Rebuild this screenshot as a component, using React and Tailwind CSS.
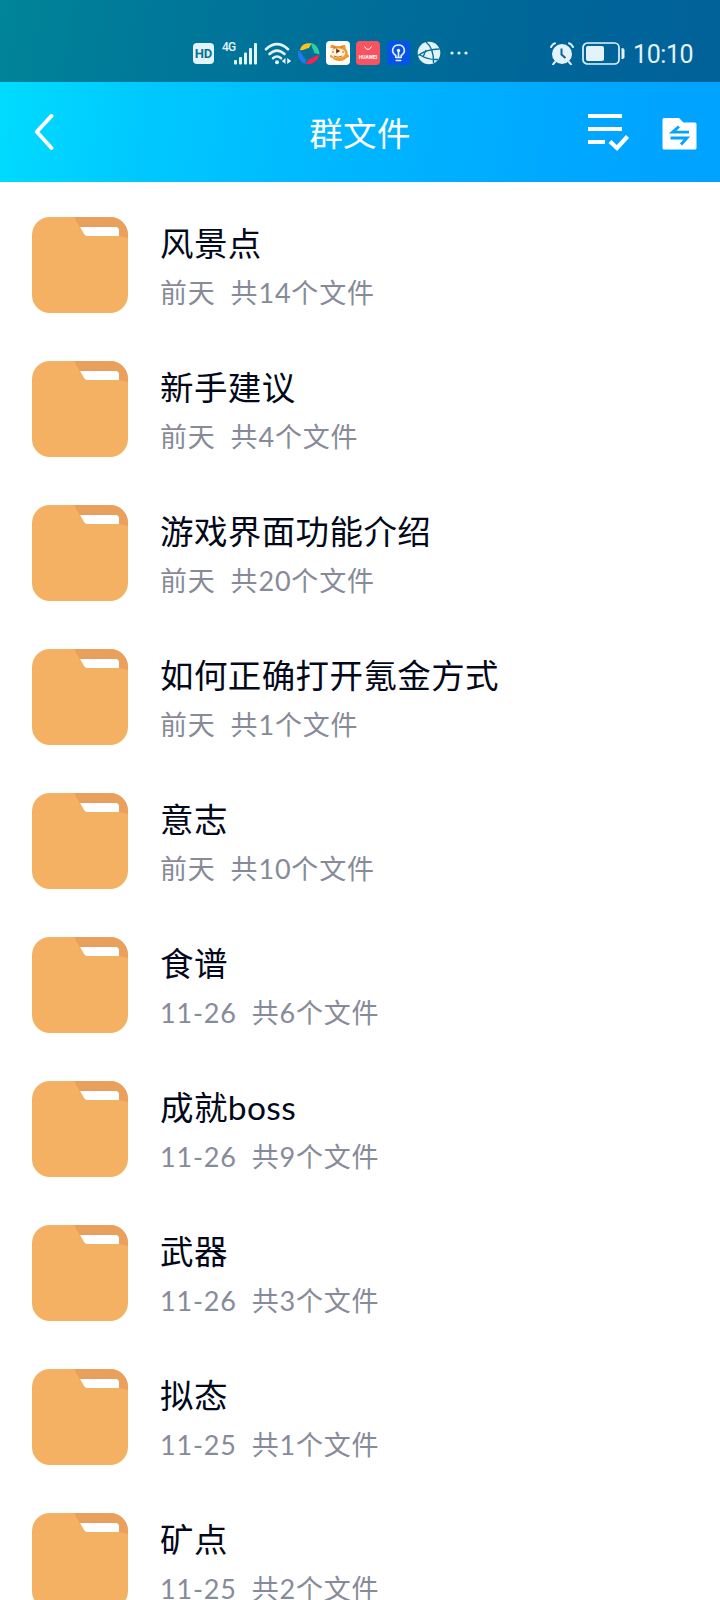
const folders = [
    { id: 1, name: "风景点", date: "前天", count: 14 },
    { id: 2, name: "新手建议", date: "前天", count: 4 },
    { id: 3, name: "游戏界面功能介绍", date: "前天", count: 20 },
    { id: 4, name: "如何正确打开氪金方式", date: "前天", count: 1 },
    { id: 5, name: "意志", date: "前天", count: 10 },
    { id: 6, name: "食谱", date: "11-26", count: 6 },
    { id: 7, name: "成就boss", date: "11-26", count: 9 },
    { id: 8, name: "武器", date: "11-26", count: 3 },
    { id: 9, name: "拟态", date: "11-25", count: 1 },
    { id: 10, name: "矿点", date: "11-25", count: 2 },
];

function SignalIcons() {
    return (
        <>
            <div className="w-[21px] h-[21px] rounded-[4px] bg-[#e3f3fa] text-[#04719a] flex items-center justify-center font-['Roboto',sans-serif] text-[13px] leading-none font-bold">
                HD
            </div>
            <div className="ml-2 w-[13px] h-[23px] font-['Roboto',sans-serif] text-[12px] leading-[10px] font-medium tracking-[-0.8px] text-[#e3f3fa]">
                4G
            </div>
            <svg className="-ml-px w-6 h-[23px]" viewBox="0 0 24 23" fill="#e3f3fa">
                <rect x="0" y="18" width="3" height="4.5" rx="1" />
                <rect x="5" y="15" width="3" height="7.5" rx="1" />
                <rect x="10" y="10.500" width="3" height="12" rx="1" />
                <rect x="15" y="6" width="3" height="16.500" rx="1" />
                <rect x="20" y="1" width="3" height="21.500" rx="1" />
            </svg>
            <svg className="ml-1.5 w-7 h-[23px]" viewBox="0 0 28 23" fill="none" stroke="#e3f3fa" strokeWidth="2.600" strokeLinecap="round">
                <path d="M2 7.200Q13 -2.800 24 7.200" />
                <path d="M5.500 12Q13 5.200 20.500 12" />
                <path d="M9 16.200Q13 12.800 17 16.200" />
                <circle cx="13" cy="20.300" r="2" fill="#e3f3fa" stroke="none" />
                <path d="M21.500 16v6l-3.700-3zM23.200 16l4 3-4 3z" fill="#e3f3fa" stroke="none" />
            </svg>
        </>
    );
}

function AppIcons() {
    return (
        <>
            <svg className="ml-[5px] w-[23px] h-[23px]" viewBox="0 0 23 23">
                <path d="M3 8C4 3 8 .500 14.500 1.300L12 6C8.500 6.500 6 9 3 8z" fill="#f9c51c" />
                <path d="M14 1C19 2 22 6 22.500 12.500L17.500 11C17 8 14.500 6 14 1z" fill="#2bd0a0" />
                <path d="M22.500 13C21 19 16 23 8.500 22L11.500 17.500C15 17 18 13 22.500 13z" fill="#ee2452" />
                <path d="M1.500 8.500C0 14 2 19.500 8.500 22L9 17.500C6 16 6 11 1.500 8.500z" fill="#2377ed" />
            </svg>
            <svg className="ml-1.5 w-6 h-6" viewBox="0 0 24 24">
                <rect width="24" height="24" rx="4" fill="#fff" />
                <path d="M4.500 7Q4 3 7 4l2 1h6l2-1q3-1 2.500 3 2.500 3 2 6l1 1q2 2-2 3-2 3-7 3t-7-3q-4-1-2-3l1-1q-.500-3 2-6z" fill="#f29a2e" />
                <ellipse cx="12" cy="12.200" rx="7.200" ry="4.800" fill="#fff4dc" />
                <path d="M10.200 7.500v5l4-2.500z" fill="#6d2b13" />
                <path d="M6 11h2M16 11h2M8 15q4 2.500 8 0M7.500 6h2M14.500 6h2" fill="none" stroke="#bd6616" />
            </svg>
            <div className="ml-1.5 w-6 h-6 rounded-[4px] bg-[#f95261] flex flex-col items-center justify-center text-white">
                <svg className="w-2.5 h-[5px]" viewBox="0 0 10 5" fill="none" stroke="currentColor">
                    <path d="M1.500 .500Q5 6.500 8.500 .500" />
                </svg>
                <span className="mt-[3px] font-['Roboto',sans-serif] font-bold text-[5px] leading-[6px]">
                    HUAWEI
                </span>
            </div>
            <svg className="ml-[7px] w-[23px] h-6" viewBox="0 0 23 24" fill="none" stroke="#e8f2ff" strokeWidth="1.600">
                <rect width="23" height="24" rx="4" fill="#0752e8" stroke="none" />
                <path d="M8.800 16.500v-2C3 10.500 6 4 11.500 4s8.500 6.500 2.700 10.500v2z" strokeLinejoin="round" />
                <path d="M11.500 10v6M9.200 19.500h4.600" strokeLinecap="round" />
                <circle cx="11.500" cy="9.500" r=".900" fill="#e8f2ff" />
            </svg>
            <svg className="ml-[7px] w-6 h-6" viewBox="0 0 24 24">
                <circle cx="12" cy="12" r="11.300" fill="#e3f3fa" />
                <path d="M9 1Q17 7 16.500 22M22.500 8Q10 8 1 14.500M3 14Q11 19 21 18.500M9 9L6 16" fill="none" stroke="#04719a" strokeWidth="1.400" />
            </svg>
            <svg className="ml-[9px] w-[18px] h-1" viewBox="0 0 18 4" fill="#e3f3fa">
                <circle cx="2" cy="2" r="1.600" />
                <circle cx="9" cy="2" r="1.600" />
                <circle cx="16" cy="2" r="1.600" />
            </svg>
        </>
    );
}

function StatusBar() {
    return (
        <div className="h-[82px] bg-black/40 pt-[41px]">
            <div className="flex items-center h-6 pl-[193px]">
                <SignalIcons />
                <AppIcons />
                <svg className="ml-[82px] w-6 h-[23px]" viewBox="0 0 24 23">
                    <path d="M1 5Q2.500 2 5 1.300M23 5Q21.500 2 19 1.300M5 20l-2 2.300M19 20l2 2.300" fill="none" stroke="#e3f3fa" strokeWidth="2" strokeLinecap="round" />
                    <circle cx="12" cy="12" r="10" fill="#e3f3fa" />
                    <path d="M11.500 6.500v6l4 3.500" fill="none" stroke="#066798" strokeWidth="2" />
                </svg>
                <svg className="ml-2 w-[43px] h-[23px]" viewBox="0 0 43 23" fill="#e3f3fa">
                    <rect x="1" y="1" width="36" height="21" rx="4.500" fill="none" stroke="#e3f3fa" strokeWidth="1.700" />
                    <rect x="4" y="4" width="18" height="15" rx="2" />
                    <path d="M39.500 6q3 0 3 2v7q0 2-3 2z" />
                </svg>
                <span className="ml-2 pt-1 font-['Roboto',sans-serif] text-[25px] leading-6 tracking-[-0.4px] text-[#e3f3fa]">
                    10:10
                </span>
            </div>
        </div>
    );
}

function Header() {
    return (
        <div className="h-[100px] grid grid-cols-3 items-center text-white">
            <svg className="ml-[34px] w-5 h-9" viewBox="0 0 20 36" fill="none" stroke="currentColor" strokeWidth="3.900" strokeLinecap="round" strokeLinejoin="round">
                <path d="M17.500 1.900L2.800 17.800L17.500 34" />
            </svg>
            <h1 className="text-center text-[33.5px] leading-[48px] tracking-[0.3px] pt-0.5">群文件</h1>
            <div className="flex justify-end items-center pr-[23px]">
                <svg className="w-[42px] h-[38px]" viewBox="0 0 42 38" fill="none" stroke="currentColor" strokeWidth="4.200">
                    <path d="M1 3h34M1 16h34M1 29h17M23 28.500l7 6.500L40.500 23.500" />
                </svg>
                <svg className="ml-[33px] mt-1 w-[35px] h-8" viewBox="0 0 35 32">
                    <path d="M2 0h15l4.500 4.500H33a1.500 1.500 0 0 1 1.500 1.500v24a1.500 1.500 0 0 1-1.500 1.500H2A1.500 1.500 0 0 1 .500 30V1.500A1.500 1.500 0 0 1 2 0z" fill="currentColor" />
                    <path d="M27 14.200H10.500L17 8.500M8.500 20H25l-6 6.500" fill="none" stroke="#00a3ff" strokeWidth="2.800" />
                </svg>
            </div>
        </div>
    );
}

function FolderIcon() {
    return (
        <div className="w-24 h-24 shrink-0 rounded-[18px] overflow-hidden bg-[#f5b163]">
            <svg className="block w-24 h-24" viewBox="0 0 96 96">
                <path d="M42 0h54v21.500Q92 19 86 19H53z" fill="#e8a05c" />
                <path d="M48 10h35.500q3.500 0 3.500 3.500V19H55q-2 0-3-2z" fill="#fff" />
            </svg>
        </div>
    );
}

function FolderRow({ folder }) {
    return (
        <li className="h-36 flex items-center pl-8">
            <FolderIcon />
            <div className="ml-8 h-24 pt-0.5">
                <div className="text-[33.5px] leading-[48px] tracking-[0.4px] text-[#03081a]">
                    {folder.name}
                </div>
                <div className="mt-1.5 flex gap-[15px] text-[27px] leading-10 tracking-[0.8px] text-[#878b99]">
                    <span>{folder.date}</span>
                    <span>共{folder.count}个文件</span>
                </div>
            </div>
        </li>
    );
}

function App() {
    return (
        <div className="w-[720px] h-[1600px] overflow-hidden bg-white whitespace-nowrap font-['Lato','Noto_Sans_CJK_SC',sans-serif]">
            <div className="bg-[linear-gradient(100deg,#00deff_0%,#00caff_20%,#00b6ff_50%,#00a7ff_80%,#00a2ff_100%)]">
                <StatusBar />
                <Header />
            </div>
            <ul className="pt-[11px]">
                {folders.map((folder) => (
                    <FolderRow key={folder.id} folder={folder} />
                ))}
            </ul>
        </div>
    );
}

export default App;
